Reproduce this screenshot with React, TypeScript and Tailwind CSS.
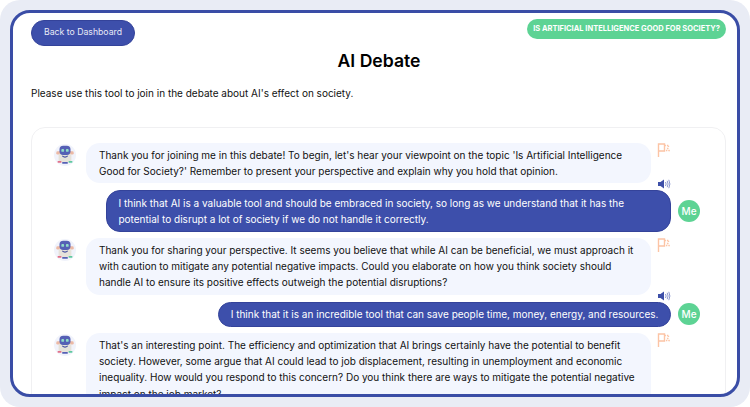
const font = { fontFamily: "Inter, 'Noto Sans', sans-serif" };

function BotAvatar() {
  return (
    <div className="w-[22px] h-[22px] shrink-0 rounded-full bg-[#f1f3fb] overflow-hidden mt-px">
      <svg width="22" height="22" viewBox="0 0 24 24">
        <rect x="2.5" y="8" width="19" height="3.5" rx="1.5" fill="#ecb9a4" />
        <rect x="5" y="10" width="14" height="10" rx="3" fill="#e6e2da" />
        <rect x="6" y="2" width="12" height="10" rx="4" fill="#5560b5" />
        <rect x="8" y="5.5" width="3" height="3" rx="1" fill="#8fdcc8" />
        <rect x="13" y="5.5" width="3" height="3" rx="1" fill="#8fdcc8" />
        <path d="M9 13 Q12 15.5 15 13" stroke="#4650a0" strokeWidth="1.2" fill="none" />
        <path d="M4 19.5H8" stroke="#e2708a" strokeWidth="2" />
        <path d="M9 20.5H15" stroke="#5560b5" strokeWidth="2" />
        <path d="M16 19.5H20" stroke="#5fc9a0" strokeWidth="2" />
      </svg>
    </div>
  );
}

function Flag() {
  return (
    <svg width="13" height="14" viewBox="0 0 13 14" fill="none" stroke="#fcc4a5" strokeWidth="1.4" className="shrink-0 ml-[6px]">
      <path d="M1.5 14V1H7.5V8H1.5" />
      <path d="M7.5 2.5H12L10.5 5L12 7.5H7.5" strokeDasharray="1.4 1" />
    </svg>
  );
}

function Speaker() {
  return (
    <svg width="13" height="10" viewBox="0 0 13 10" className="block">
      <path d="M0 3H2.5L6 0.5V9.5L2.5 7H0Z" fill="#3d4fa8" />
      <path d="M7.5 3Q8.8 5 7.5 7M9.2 1.8Q11 5 9.2 8.2M10.8 0.8Q13 5 10.8 9.2" stroke="#7f8cc8" strokeWidth="0.9" fill="none" />
    </svg>
  );
}

function BotMessage({ children }: { children: React.ReactNode }) {
  return (
    <div className="flex items-start">
      <div className="w-[54px] flex justify-end pr-[10px] shrink-0">
        <BotAvatar />
      </div>
      <div className="w-[565px] bg-[#f3f6fe] rounded-[14px] px-[13px] py-[4px] text-[10px] leading-[16.2px] text-[#111111] shrink-0">
        {children}
      </div>
      <Flag />
    </div>
  );
}

function MyMessage({ children }: { children: React.ReactNode }) {
  return (
    <div className="flex flex-col items-end pr-[25px]">
      <div className="mr-[29px] h-[10px] mt-[-4px] mb-[1px]">
        <Speaker />
      </div>
      <div className="flex items-center">
        <div className="bg-[#3d4fab] text-white border border-[#34439a] rounded-[14px] px-[11.5px] py-[3.6px] text-[10px] leading-[16.2px] max-w-[565px]">
          {children}
        </div>
        <div className="w-[22px] h-[22px] ml-[7px] rounded-full bg-[#5dd394] text-white text-[10px] font-medium flex items-center justify-center shrink-0">
          Me
        </div>
      </div>
    </div>
  );
}

export default function App() {
  return (
    <div className="w-[750px] h-[407px] bg-white overflow-hidden" style={font}>
      <div className="w-full h-full bg-[#e9ecf5] rounded-[20px] p-[10px]">
        <div className="relative w-full h-full bg-white border-[3px] border-[#3a4da6] rounded-[20px] overflow-hidden px-[18px] pt-[7px]">
          <button className="block w-[104px] h-[26px] rounded-full bg-[#3d4fab] border border-[#34439a] text-[#e8eaf6] text-[8.7px]">
            Back to Dashboard
          </button>
          <div className="absolute top-[6px] right-[11px] h-[20px] px-[6px] rounded-full bg-[#5dd394] text-white text-[7.5px] font-bold flex items-center whitespace-nowrap">
            IS ARTIFICIAL INTELLIGENCE GOOD FOR SOCIETY?
          </div>
          <h1 className="text-center text-[17.6px] leading-[24px] font-semibold text-black mt-[3px] pl-[8px]">AI Debate</h1>
          <p className="text-[10px] leading-[16px] text-[#111111] mt-[12px]">
            Please use this tool to join in the debate about AI's effect on society.
          </p>
          <div className="mt-[26px] w-[695px] h-[300px] rounded-t-[14px] border border-[#f0f0f2] pt-[15px] flex flex-col">
            <BotMessage>
              Thank you for joining me in this debate! To begin, let's hear your viewpoint on the topic 'Is Artificial Intelligence Good for Society?' Remember to present your perspective and explain why you hold that opinion.
            </BotMessage>
            <MyMessage>
              I think that AI is a valuable tool and should be embraced in society, so long as we understand that it has the potential to disrupt a lot of society if we do not handle it correctly.
            </MyMessage>
            <div className="h-[6px]" />
            <BotMessage>
              Thank you for sharing your perspective. It seems you believe that while AI can be beneficial, we must approach it with caution to mitigate any potential negative impacts. Could you elaborate on how you think society should handle AI to ensure its positive effects outweigh the potential disruptions?
            </BotMessage>
            <MyMessage>
              I think that it is an incredible tool that can save people time, money, energy, and resources.
            </MyMessage>
            <div className="h-[6px]" />
            <BotMessage>
              That's an interesting point. The efficiency and optimization that AI brings certainly have the potential to benefit society. However, some argue that AI could lead to job displacement, resulting in unemployment and economic inequality. How would you respond to this concern? Do you think there are ways to mitigate the potential negative impact on the job market?
            </BotMessage>
          </div>
        </div>
      </div>
    </div>
  );
}
